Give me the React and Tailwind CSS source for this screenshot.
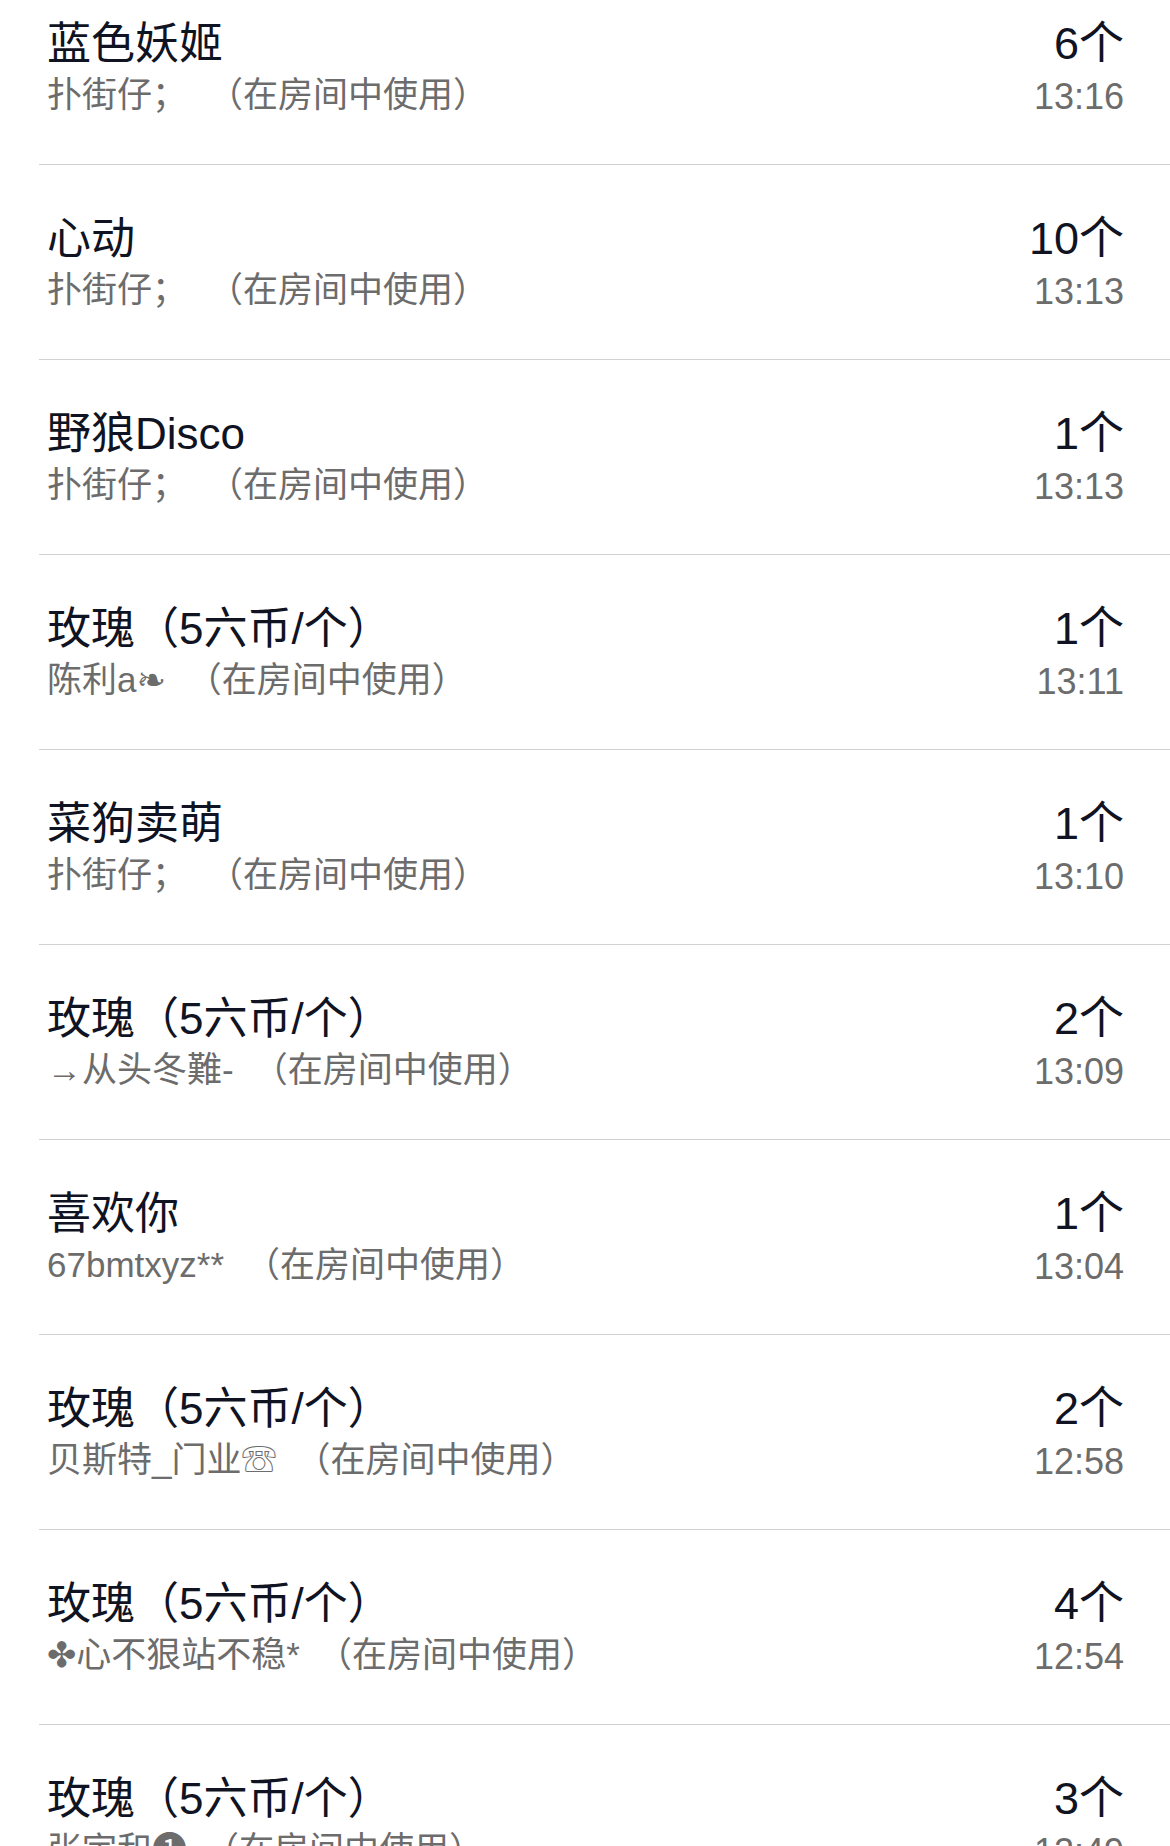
const rows = [
  { title: "蓝色妖姬", user: "扑街仔；", count: "6个", time: "13:16", gap: "ml-[21px]" },
  { title: "心动", user: "扑街仔；", count: "10个", time: "13:13", gap: "ml-[21px]" },
  { title: "野狼Disco", user: "扑街仔；", count: "1个", time: "13:13", gap: "ml-[21px]" },
  { title: "玫瑰（5六币/个）", user: "陈利a❧", count: "1个", time: "13:11", gap: "ml-[21px]" },
  { title: "菜狗卖萌", user: "扑街仔；", count: "1个", time: "13:10", gap: "ml-[21px]" },
  { title: "玫瑰（5六币/个）", user: "→从头冬難-", count: "2个", time: "13:09", gap: "ml-[19px]" },
  { title: "喜欢你", user: "67bmtxyz**", count: "1个", time: "13:04", gap: "ml-[21px]" },
  { title: "玫瑰（5六币/个）", user: "贝斯特_门业☏", count: "2个", time: "12:58", gap: "ml-[19px]" },
  { title: "玫瑰（5六币/个）", user: "✤心不狠站不稳*", count: "4个", time: "12:54", gap: "ml-[17px]" },
  { title: "玫瑰（5六币/个）", user: "张宇和❶", count: "3个", time: "12:49", gap: "ml-[17px]" },
];

function Row({ r }) {
  return (
    <div className="ml-[39px] h-[195px] border-b border-[#d2d2d2] flex justify-between pl-[8px] pr-[46px]">
      <div className="flex flex-col pt-[48px]">
        <div className="text-[44px] leading-[52px] text-[#0f1322] whitespace-nowrap">{r.title}</div>
        <div className="mt-[4px] text-[35px] leading-[42px] text-[#6c6c6c] whitespace-nowrap [text-spacing-trim:space-all]">
          <span>{r.user}</span>
          <span className={r.gap}>（在房间中使用）</span>
        </div>
      </div>
      <div className="flex flex-col items-end pt-[48px]">
        <div className="text-[45px] leading-[52px] text-[#0f1322] whitespace-nowrap">{r.count}</div>
        <div className="mt-[6px] text-[36px] leading-[42px] text-[#6c6c6c] whitespace-nowrap">{r.time}</div>
      </div>
    </div>
  );
}

export default function App() {
  return (
    <div className="w-[1170px] h-[1846px] overflow-hidden bg-white font-['Liberation_Sans','Noto_Sans_CJK_SC','DejaVu_Sans',sans-serif]">
      <div className="mt-[-30px]">
        {rows.map((r, i) => (
          <Row key={i} r={r} />
        ))}
      </div>
    </div>
  );
}
